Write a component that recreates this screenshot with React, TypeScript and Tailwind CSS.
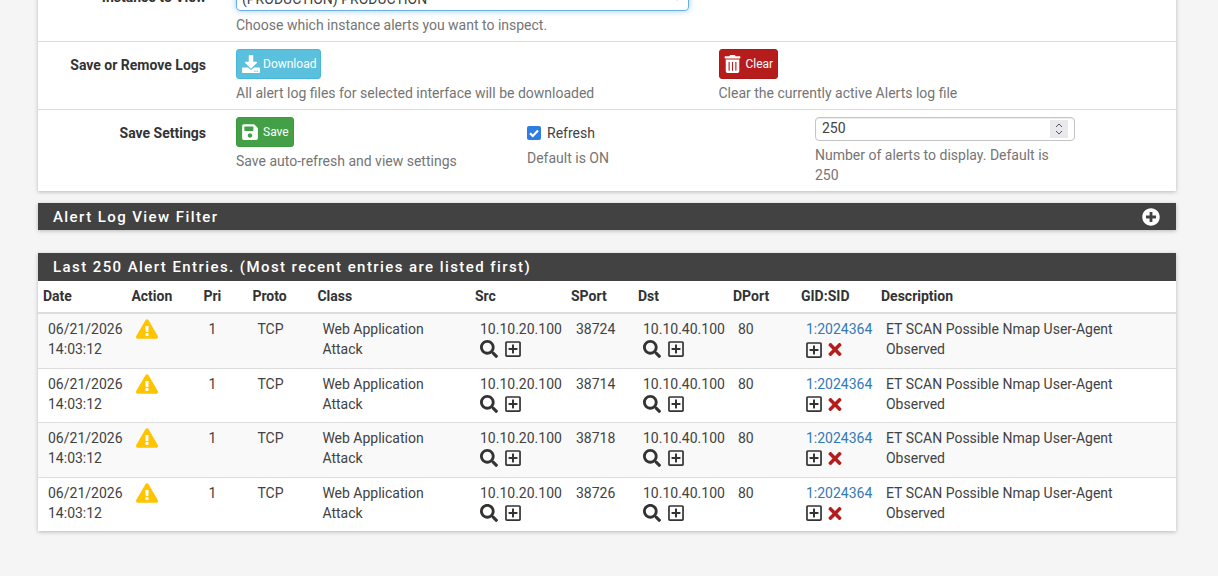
import { ChevronDown } from 'lucide-react'
import {
  FaDownload,
  FaExclamationTriangle,
  FaPlusCircle,
  FaRegPlusSquare,
  FaSave,
  FaSearch,
  FaTimes,
  FaTrashAlt,
} from 'react-icons/fa'

const alerts = [
  { sport: '38724' },
  { sport: '38714' },
  { sport: '38718' },
  { sport: '38726' },
]

const columns = [
  { label: 'Date', width: 'w-[88.4px]' },
  { label: 'Action', width: 'w-[72px]' },
  { label: 'Pri', width: 'w-[49px]' },
  { label: 'Proto', width: 'w-[65px]' },
  { label: 'Class', width: 'w-[157.6px]' },
  { label: 'Src', width: 'w-[96px]' },
  { label: 'SPort', width: 'w-[67px]' },
  { label: 'Dst', width: 'w-[95px]' },
  { label: 'DPort', width: 'w-[68px]' },
  { label: 'GID:SID', width: 'w-[80px]' },
  { label: 'Description', width: 'w-[300px]' },
]

function Help({ children }: { children: React.ReactNode }) {
  return <div className="leading-5 text-[#757575]">{children}</div>
}

function Label({ children }: { children: React.ReactNode }) {
  return <div className="w-[168px] shrink-0 pt-[6px] text-right font-bold leading-5 text-[#333]">{children}</div>
}

function Lookup() {
  return (
    <div className="mt-[1px] flex items-center gap-[6px] text-[#333]">
      <FaSearch className="h-[18px] w-[18px]" />
      <FaRegPlusSquare className="h-[18px] w-[18px]" />
    </div>
  )
}

export default function App() {
  return (
    <div className="h-[576px] overflow-hidden bg-[#f5f5f5] px-[38px] font-['Roboto',sans-serif] text-sm text-[#424242]">
      <div className="-mt-[26px] w-[1138px] bg-white shadow-[0_1px_4px_rgba(0,0,0,0.25)]">
        <div className="flex h-[68px] border-b border-[#ddd] pt-[7px]">
          <Label>Instance to View</Label>
          <div className="ml-[30px]">
            <div className="flex h-[30px] w-[453px] items-end justify-between rounded border border-[#66afe9] px-[5px] pb-[1px] leading-5 shadow-[0_0_6px_rgba(102,175,233,0.6)]">
              <span>(PRODUCTION) PRODUCTION</span>
              <ChevronDown className="h-3 w-3 translate-y-[-5px]" strokeWidth={3} />
            </div>
            <div className="mt-[4px]">
              <Help>Choose which instance alerts you want to inspect.</Help>
            </div>
          </div>
        </div>

        <div className="flex h-[68px] border-b border-[#ddd] pt-[7px]">
          <Label>Save or Remove Logs</Label>
          <div className="ml-[30px] w-[482.5px]">
            <div className="flex h-[30px] w-[85px] items-center gap-[3px] rounded-[3px] border border-[#46b8da] bg-[#5bc0de] pl-[5px] text-xs text-white">
              <FaDownload className="h-[18px] w-[18px]" />
              Download
            </div>
            <div className="mt-[4px]">
              <Help>All alert log files for selected interface will be downloaded</Help>
            </div>
          </div>
          <div>
            <div className="flex h-[30px] w-[59px] items-center gap-[5px] rounded-[3px] border border-[#a91b1b] bg-[#b71c1c] pl-[4px] text-xs text-white">
              <FaTrashAlt className="h-[18px] w-[17px]" />
              Clear
            </div>
            <div className="mt-[4px]">
              <Help>Clear the currently active Alerts log file</Help>
            </div>
          </div>
        </div>

        <div className="flex h-[81px] pt-[7px]">
          <Label>Save Settings</Label>
          <div className="ml-[30px] w-[291px]">
            <div className="flex h-[30px] w-[58px] items-center gap-[4px] rounded-[3px] border border-[#3d9940] bg-[#43a047] pl-[4px] text-xs text-white">
              <FaSave className="h-[18px] w-[18px]" />
              Save
            </div>
            <div className="mt-[4px]">
              <Help>Save auto-refresh and view settings</Help>
            </div>
          </div>
          <div className="w-[288px]">
            <div className="flex h-5 items-center gap-[6px] pt-[12px] leading-5">
              <span className="flex h-[14px] w-[14px] items-center justify-center rounded-[2px] bg-[#2f7de1] text-white">
                <svg viewBox="0 0 14 14" className="h-[14px] w-[14px]" fill="none" stroke="currentColor" strokeWidth="2.2">
                  <path d="M3 7.2l2.8 2.8L11 4.4" />
                </svg>
              </span>
              Refresh
            </div>
            <div className="mt-[11px]">
              <Help>Default is ON</Help>
            </div>
          </div>
          <div className="w-[260px]">
            <div className="flex h-6 items-center justify-between rounded border border-[#c4c4c4] pl-[6px] pr-[6px] leading-5 shadow-[inset_0_1px_1px_rgba(0,0,0,0.075)]">
              <span className="-translate-y-[1px]">250</span>
              <span className="flex h-[18px] w-[18px] flex-col items-center justify-center bg-[#e9e9ed] text-[#555]">
                <svg viewBox="0 0 10 14" className="h-[14px] w-[10px]" fill="none" stroke="currentColor" strokeWidth="1">
                  <path d="M2 5l3-3 3 3M2 9l3 3 3-3" />
                </svg>
              </span>
            </div>
            <div className="mt-[4px] w-[240px]">
              <Help>Number of alerts to display. Default is 250</Help>
            </div>
          </div>
        </div>
      </div>

      <div className="mt-3 flex h-[27px] w-[1138px] items-center justify-between bg-[#424242] pl-[15px] pr-4 text-[15px] font-medium tracking-[1.42px] text-white shadow-[0_1px_4px_rgba(0,0,0,0.25)]">
        <span className="translate-y-[1px]">Alert Log View Filter</span>
        <FaPlusCircle className="h-[18px] w-[18px]" />
      </div>

      <div className="mt-[23px] w-[1138px] bg-white shadow-[0_1px_4px_rgba(0,0,0,0.25)]">
        <div className="flex h-[28px] items-center bg-[#424242] pl-[15px] pt-[1px] text-[15px] font-medium tracking-[1.42px] text-white">
          Last 250 Alert Entries. (Most recent entries are listed first)
        </div>
        <table className="w-full table-fixed border-collapse">
          <thead>
            <tr className="h-[32px] border-b-2 border-[#ddd]">
              {columns.map((c) => (
                <th key={c.label} className={`${c.width} pb-[2px] pl-[5px] text-left font-bold text-[#333]`}>
                  {c.label}
                </th>
              ))}
            </tr>
          </thead>
          <tbody className="leading-5">
            {alerts.map((a, i) => (
              <tr key={a.sport} className={`border-b border-[#ddd] last:border-b-0 ${i % 2 === 0 ? 'bg-[#f9f9f9]' : 'bg-white'}`}>
                <td className={`${i % 2 === 0 ? 'h-[55px]' : 'h-[54px]'} pl-[10px] align-top pt-[5px]`}>
                  06/21/2026
                  <br />
                  14:03:12
                </td>
                <td className="pl-[10px] align-top pt-[5px]">
                  <FaExclamationTriangle className="h-[20px] w-[22px] text-[#ffc400]" />
                </td>
                <td className="pl-[10px] align-top pt-[5px]">1</td>
                <td className="pl-[10px] align-top pt-[5px]">TCP</td>
                <td className="pl-[10px] align-top pt-[5px]">
                  Web Application
                  <br />
                  Attack
                </td>
                <td className="pl-[10px] align-top pt-[5px]">
                  10.10.20.100
                  <Lookup />
                </td>
                <td className="pl-[10px] align-top pt-[5px]">{a.sport}</td>
                <td className="pl-[10px] align-top pt-[5px]">
                  10.10.40.100
                  <Lookup />
                </td>
                <td className="pl-[10px] align-top pt-[5px]">80</td>
                <td className="pl-[10px] align-top pt-[5px]">
                  <span className="text-[#337ab7]">1:2024364</span>
                  <div className="mt-[1px] flex items-center gap-[5px] text-[#333]">
                    <FaRegPlusSquare className="h-[18px] w-[18px] -translate-x-[1px]" />
                    <FaTimes className="h-[19px] w-[14px] -translate-x-[1px] text-[#b71c1c]" />
                  </div>
                </td>
                <td className="pl-[10px] pr-10 align-top pt-[5px]">ET SCAN Possible Nmap User-Agent Observed</td>
              </tr>
            ))}
          </tbody>
        </table>
      </div>
    </div>
  )
}
